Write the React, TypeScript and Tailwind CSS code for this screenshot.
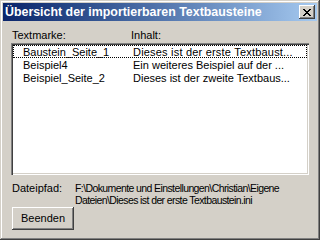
import React from "react";

const rows = [
  ["Baustein_Seite_1", "Dieses ist der erste Textbaust..."],
  ["Beispiel4", "Ein weiteres Beispiel auf der ..."],
  ["Beispiel_Seite_2", "Dieses ist der zweite Textbaus..."],
];

export default function App() {
  return (
    <div
      className="w-[320px] h-[240px] bg-[#D4D0C8] p-[3px] flex flex-col text-[11px] text-black shadow-[inset_-1px_-1px_#404040,inset_1px_1px_#D4D0C8,inset_-2px_-2px_#808080,inset_2px_2px_#ffffff]"
      style={{ fontFamily: '"Liberation Sans", Arial, sans-serif' }}
    >
      {/* title bar */}
      <div className="h-[18px] flex items-center pl-[2px] pr-[2px] bg-gradient-to-r from-[#0A246A] to-[#A6CAF0]">
        <span className="text-white font-bold text-[12.4px] leading-[18px] whitespace-nowrap">
          Übersicht der importierbaren Textbausteine
        </span>
        <div className="ml-auto w-[16px] h-[14px] bg-[#D4D0C8] flex items-center justify-center shadow-[inset_-1px_-1px_#404040,inset_1px_1px_#ffffff,inset_-2px_-2px_#808080]">
          <svg width="8" height="7" viewBox="0 0 8 7" shapeRendering="crispEdges">
            <path
              d="M0 0h2v1H0zM6 0h2v1H6zM1 1h2v1H1zM5 1h2v1H5zM2 2h4v1H2zM3 3h2v1H3zM2 4h4v1H2zM1 5h2v1H1zM5 5h2v1H5zM0 6h2v1H0zM6 6h2v1H6z"
              fill="#000"
            />
          </svg>
        </div>
      </div>

      <div className="flex flex-col px-[8px]">
        <div className="mt-[8px] h-[13px] leading-[13px] flex pl-[1px]">
          <span className="w-[119px]">Textmarke:</span>
          <span>Inhalt:</span>
        </div>

        <div className="mt-[1px] h-[132px] bg-white p-[2px] shadow-[inset_1px_1px_#808080,inset_2px_2px_#404040,inset_-1px_-1px_#ffffff,inset_-2px_-2px_#D4D0C8]">
          {rows.map(([a, b], i) => (
            <div
              key={i}
              className={
                "h-[13px] leading-[12px] flex whitespace-nowrap " +
                (i === 0 ? "border border-dotted border-black" : "border border-transparent")
              }
            >
              <span className="w-[119px] shrink-0 pl-[9px]">{a}</span>
              <span className={i === 0 ? "tracking-[0.2px]" : ""}>{b}</span>
            </div>
          ))}
        </div>

        <div className="mt-[7px] flex leading-[12px] pl-[1px] whitespace-nowrap">
          <span className="w-[63px] shrink-0">Dateipfad:</span>
          <span className="text-[10.5px] tracking-[-0.6px]">
            F:\Dokumente und Einstellungen\Christian\Eigene
            <br />
            Dateien\Dieses ist der erste Textbaustein.ini
          </span>
        </div>

        <button className="mt-[1px] ml-[1px] w-[62px] h-[23px] bg-[#D4D0C8] text-[11px] shadow-[inset_-1px_-1px_#404040,inset_1px_1px_#ffffff,inset_-2px_-2px_#808080]">
          Beenden
        </button>
      </div>
    </div>
  );
}
